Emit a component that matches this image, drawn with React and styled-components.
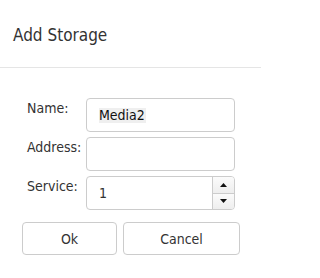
import React, { useState } from "react";
import styled, { createGlobalStyle } from "styled-components";

const GlobalStyle = createGlobalStyle`
  html, body {
    margin: 0;
    padding: 0;
    background: #ffffff;
  }
  body {
    font-family: Tahoma, "DejaVu Sans Condensed", "DejaVu Sans", sans-serif;
    font-stretch: condensed;
    color: #333333;
  }
`;

const Dialog = styled.div`
  width: 261px;
  height: 278px;
  background: #ffffff;
`;

const Header = styled.div`
  height: 68px;
  box-sizing: border-box;
  padding: 24px 13px 0;
  border-bottom: 1px solid #e5e5e5;
`;

const Title = styled.h4`
  margin: 0;
  font-size: 17px;
  font-weight: normal;
  line-height: 22px;
  color: #333333;
`;

const Form = styled.div`
  display: grid;
  grid-template-columns: 59px 149px;
  row-gap: 5px;
  padding: 30px 0 0 27px;
`;

const Label = styled.label`
  font-size: 14px;
  line-height: 18px;
  padding-top: 1px;
  color: #333333;
  white-space: nowrap;
`;

const Field = styled.div`
  position: relative;
  height: 34px;
  box-sizing: border-box;
  border: 1px solid #cccccc;
  border-radius: 4px;
  background: #ffffff;
  display: flex;
  align-items: center;
  padding-left: 12px;
  overflow: hidden;
`;

const Value = styled.span`
  font-size: 14px;
  line-height: 15px;
  color: ${({ $selected }) => ($selected ? "#111111" : "#333333")};
  background: ${({ $selected }) => ($selected ? "#efefef" : "transparent")};
  padding: 0 1px 0 0;
`;

const Spinner = styled.div`
  position: absolute;
  top: 0;
  right: 0;
  bottom: 0;
  width: 21px;
  border-left: 1px solid #cccccc;
  display: flex;
  flex-direction: column;
`;

const SpinButton = styled.div`
  flex: 1;
  display: flex;
  align-items: center;
  justify-content: center;
  background: linear-gradient(#fbfbfb, #eeeeee);
  & + & {
    border-top: 1px solid #cccccc;
  }
`;

const Actions = styled.div`
  display: flex;
  gap: 6px;
  padding: 12px 0 0 22px;
`;

const Button = styled.button`
  width: ${({ $width }) => $width};
  height: 33px;
  box-sizing: border-box;
  border: 1px solid #cccccc;
  border-radius: 4px;
  background: #ffffff;
  font-family: inherit;
  font-stretch: inherit;
  font-size: 14px;
  color: #333333;
  padding: 0;
`;

function Arrow({ down }) {
  return (
    <svg width="7" height="4" viewBox="0 0 7 4">
      <path d={down ? "M0 0h7L3.5 4z" : "M0 4h7L3.5 0z"} fill="#111111" />
    </svg>
  );
}

function App() {
  const [service] = useState(1);

  return (
    <>
      <GlobalStyle />
      <Dialog>
        <Header>
          <Title>Add Storage</Title>
        </Header>
        <Form>
          <Label>Name:</Label>
          <Field>
            <Value $selected>Media2</Value>
          </Field>
          <Label>Address:</Label>
          <Field />
          <Label>Service:</Label>
          <Field>
            <Value>{service}</Value>
            <Spinner>
              <SpinButton>
                <Arrow />
              </SpinButton>
              <SpinButton>
                <Arrow down />
              </SpinButton>
            </Spinner>
          </Field>
        </Form>
        <Actions>
          <Button $width="95px">Ok</Button>
          <Button $width="117px">Cancel</Button>
        </Actions>
      </Dialog>
    </>
  );
}

export default App;
